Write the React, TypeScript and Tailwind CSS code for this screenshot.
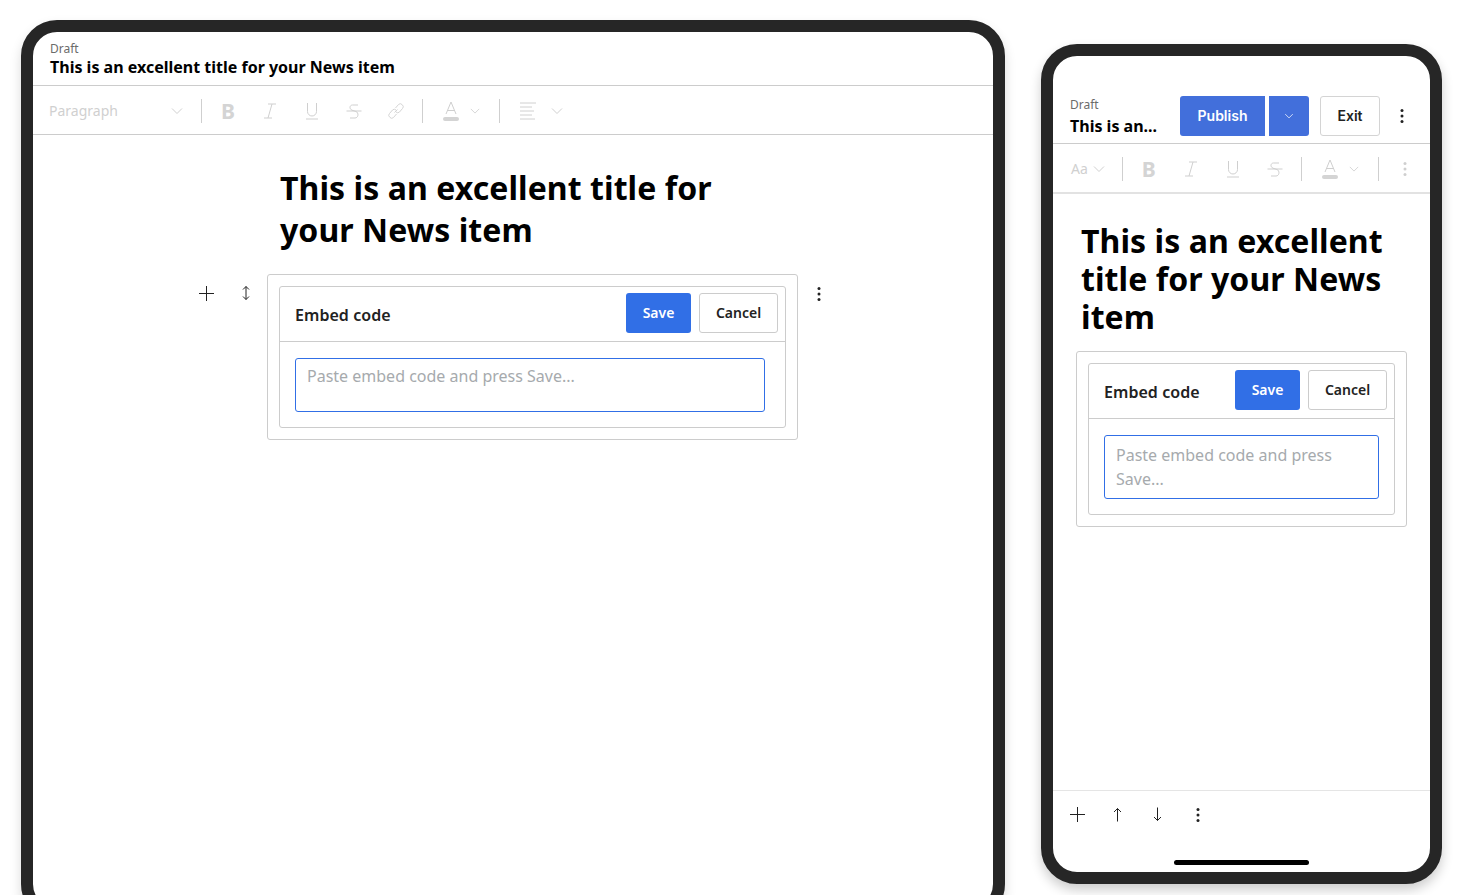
import React from "react";

const sans = "font-['Noto_Sans',sans-serif]";

function Chevron({ className = "" }: { className?: string }) {
  return (
    <svg viewBox="0 0 12 8" className={className} fill="none" stroke="currentColor" strokeWidth="1">
      <path d="M1 1.5l5 5 5-5" />
    </svg>
  );
}

function Kebab({ className = "" }: { className?: string }) {
  return (
    <svg viewBox="0 0 4 16" className={`w-1 h-4 ${className}`} fill="currentColor">
      <circle cx="2" cy="2.500" r="1.500" />
      <circle cx="2" cy="8" r="1.500" />
      <circle cx="2" cy="13.500" r="1.500" />
    </svg>
  );
}

function Plus() {
  return (
    <svg viewBox="0 0 15 15" className="w-[15px] h-[15px]" fill="none" stroke="#222" strokeWidth="1">
      <path d="M7.500 0v15M0 7.500h15" />
    </svg>
  );
}

function Arrow({ down = false }: { down?: boolean }) {
  return (
    <svg viewBox="0 0 9 15" className={down ? "w-[9px] h-[15px] rotate-180" : "w-[9px] h-[15px]"} fill="none" stroke="#222" strokeWidth="1">
      <path d="M4.500 14.500V1.500M1 5l3.500-3.500L8 5" />
    </svg>
  );
}

function Sep() {
  return <div className="w-px h-6 bg-[#cfcfcf]" />;
}

function Cell({ children }: { children: React.ReactNode }) {
  return <div className="flex items-center justify-center w-[42px]">{children}</div>;
}

function BoldIcon() {
  return <span className={`${sans} text-[21px] leading-6 font-bold text-[#d4d4d4]`}>B</span>;
}

function ItalicIcon() {
  return (
    <svg viewBox="0 0 14 16" className="w-3.5 h-4" fill="none" stroke="#cfcfcf" strokeWidth="1">
      <path d="M5 1h8M1 15h8M9 1L5 15" />
    </svg>
  );
}

function UnderlineIcon() {
  return (
    <svg viewBox="0 0 14 18" className="w-3.5 h-[18px]" fill="none" stroke="#cfcfcf" strokeWidth="1">
      <path d="M2.500 1v8.500a4.500 4.500 0 009 0V1M1 17h12" />
    </svg>
  );
}

function StrikeIcon() {
  return (
    <svg viewBox="0 0 16 16" className="w-4 h-4" fill="none" stroke="#cfcfcf" strokeWidth="1">
      <path d="M12 2H6.500C3.500 2 3 6 6 7.200l4 1.300c3 1.200 2.500 6.500-1 6.500H4M.5 8h15" />
    </svg>
  );
}

function LinkIcon() {
  return (
    <svg viewBox="0 0 18 18" className="w-[18px] h-[18px]" fill="none" stroke="#d4d4d4" strokeWidth="1">
      <path d="M7.500 10.500l3-3M8.500 6l3-3.500a2.500 2.500 0 013.500 0l.5.500a2.500 2.500 0 010 3.500l-3 3.500a2.500 2.500 0 01-3.500 0M9.500 12l-3 3.500a2.500 2.500 0 01-3.500 0L2.500 15a2.500 2.500 0 010-3.500l3-3.500a2.500 2.500 0 013.500 0" />
    </svg>
  );
}

function ColorIcon() {
  return (
    <svg viewBox="0 0 16 20" className="w-4 h-5" fill="none">
      <path d="M3 13L8 1l5 12M4.500 9.500h7" stroke="#cfcfcf" strokeWidth="1" />
      <rect x="0" y="16" width="16" height="4" rx="2" fill="#d4d4d4" />
    </svg>
  );
}

function AlignIcon() {
  return (
    <svg viewBox="0 0 16 18" className="w-4 h-[18px]" fill="none" stroke="#d0d0d0" strokeWidth="1">
      <path d="M0 1h16M0 5h12M0 9h14M0 13h12M0 17h15" />
    </svg>
  );
}

function EmbedCard({ wrapClass, inputClass }: { wrapClass: string; inputClass: string }) {
  return (
    <div className="border border-[#cccccc] rounded-[3px] p-[11px] bg-white">
      <div className="border border-[#cccccc] rounded-[3px]">
        <div className="flex items-start justify-between h-[55px] border-b border-[#cccccc] pl-[15px] pr-[7px] pt-[6px]">
          <span className={`${sans} text-base font-semibold tracking-[0.05px] text-[#222222] leading-6 mt-[10px]`}>Embed code</span>
          <div className="flex gap-2">
            <div className={`${sans} flex items-center justify-center w-[65px] h-10 rounded-[3px] bg-[#316fe6] text-white text-sm font-semibold`}>
              Save
            </div>
            <div className={`${sans} flex items-center justify-center w-[79px] h-10 rounded-[3px] border border-[#cccccc] text-[#222222] text-sm font-semibold`}>
              Cancel
            </div>
          </div>
        </div>
        <div className={`pt-4 pb-[15px] pl-[15px] ${wrapClass}`}>
          <div className={`border border-[#316fe6] rounded-[3px] px-[11px] ${sans} text-base leading-6 text-[#a6aaad] ${inputClass}`}>
            Paste embed code and press Save...
          </div>
        </div>
      </div>
    </div>
  );
}

function Tablet() {
  return (
    <div className="w-[984px] h-[900px] mt-5 shrink-0 border-[12px] border-[#262626] rounded-[36px] bg-white overflow-hidden shadow-[0_6px_12px_rgba(0,0,0,0.15)]">
      <div className="h-[54px] border-b border-[#cccccc] pl-[17px] pt-[10px]">
        <div className={`${sans} text-xs leading-[14px] text-[#6b6b6b]`}>Draft</div>
        <div className={`${sans} text-base leading-6 font-bold text-black -mt-[1px]`}>
          This is an excellent title for your News item
        </div>
      </div>
      <div className="flex items-center h-[49px] border-b border-[#cccccc] pl-4 pt-[2px]">
        <div className={`${sans} w-[122px] text-sm text-[#d0d0d0]`}>Paragraph</div>
        <Chevron className="w-3 h-2 text-[#cfcfcf]" />
        <div className="ml-[18px]"><Sep /></div>
        <div className="flex items-center ml-[5px]">
          <Cell><BoldIcon /></Cell>
          <Cell><ItalicIcon /></Cell>
          <Cell><UnderlineIcon /></Cell>
          <Cell><StrikeIcon /></Cell>
          <Cell><LinkIcon /></Cell>
        </div>
        <div className="ml-[5px]"><Sep /></div>
        <div className="ml-[20px]"><ColorIcon /></div>
        <Chevron className="w-2.5 h-2 ml-[11px] text-[#cfcfcf]" />
        <div className="ml-[19px]"><Sep /></div>
        <div className="ml-[20px]"><AlignIcon /></div>
        <Chevron className="w-3 h-2 ml-[15px] text-[#cfcfcf]" />
      </div>
      <div className="pt-[32px]">
        <h1 className={`${sans} ml-[247px] w-[480px] text-[32px] leading-[42px] font-bold tracking-[0.07px] text-black`}>
          This is an excellent title for your News item
        </h1>
        <div className="flex items-start mt-[23px] ml-[165px]">
          <div className="flex items-center pt-[11px] pl-px w-[69px]">
            <Plus />
            <svg viewBox="0 0 10 16" className="w-2.5 h-4 ml-[27px]" fill="none" stroke="#222" strokeWidth="1">
              <path d="M5 1.500v13M2 4.500l3-3 3 3M2 11.500l3 3 3-3" />
            </svg>
          </div>
          <div className="w-[531px]">
            <EmbedCard wrapClass="pr-5" inputClass="h-[54px] pt-[5px]" />
          </div>
          <div className="pl-[19px] pt-3">
            <Kebab className="text-[#222222]" />
          </div>
        </div>
      </div>
    </div>
  );
}

function Phone() {
  return (
    <div className="flex flex-col w-[401px] h-[840px] mt-11 shrink-0 border-[12px] border-[#262626] rounded-[36px] bg-white overflow-hidden shadow-[0_6px_12px_rgba(0,0,0,0.2)]">
      <div className="flex items-center h-[88px] pt-8 border-b border-[#cccccc] pl-[17px] shrink-0">
        <div className="w-[110px] mt-1">
          <div className={`${sans} text-xs leading-[14px] text-[#6b6b6b]`}>Draft</div>
          <div className={`${sans} text-base leading-6 font-bold text-black mt-0.5`}>This is an...</div>
        </div>
        <div className="flex items-center font-['Inter',sans-serif] text-sm font-semibold">
          <div className="flex items-center justify-center w-[85px] h-10 bg-[#426fdb] text-white rounded-l-[3px]">Publish</div>
          <div className="flex items-center justify-center w-10 h-10 ml-1 bg-[#426fdb] text-white rounded-r-[3px]">
            <Chevron className="w-2.5 h-1.5" />
          </div>
          <div className="flex items-center justify-center w-[60px] h-10 ml-[11px] border border-[#d4d4d4] rounded-[3px] text-[#222222]">Exit</div>
          <Kebab className="ml-5 text-[#222222]" />
        </div>
      </div>
      <div className="flex items-center h-[50px] border-b-2 border-[#e2e2e2] pl-[18px] pt-[2px] shrink-0">
        <span className={`${sans} text-sm text-[#d0d0d0]`}>Aa</span>
        <Chevron className="w-3 h-2 ml-[5px] text-[#cfcfcf]" />
        <div className="ml-[17px]"><Sep /></div>
        <div className="flex items-center ml-[5px]">
          <Cell><BoldIcon /></Cell>
          <Cell><ItalicIcon /></Cell>
          <Cell><UnderlineIcon /></Cell>
          <Cell><StrikeIcon /></Cell>
        </div>
        <div className="ml-[5px]"><Sep /></div>
        <div className="ml-[20px]"><ColorIcon /></div>
        <Chevron className="w-2.5 h-2 ml-[11px] text-[#cfcfcf]" />
        <div className="ml-[19px]"><Sep /></div>
        <Kebab className="ml-6 text-[#cfcfcf]" />
      </div>
      <div className="flex-1 px-[23px] pt-[28px]">
        <h1 className={`${sans} ml-[5px] text-[32px] leading-[38px] font-bold tracking-[0.07px] text-black`}>
          This is an excellent title for your News item
        </h1>
        <div className="mt-[15px]">
          <EmbedCard wrapClass="pr-[15px]" inputClass="h-16 pt-[7px]" />
        </div>
      </div>
      <div className="flex items-center h-[50px] border-t border-[#e5e5e5] pl-1 pb-[2px] shrink-0">
        <div className="flex justify-center w-10"><Plus /></div>
        <div className="flex justify-center w-10"><Arrow /></div>
        <div className="flex justify-center w-10"><Arrow down /></div>
        <div className="flex justify-center w-10 pl-0.5"><Kebab className="text-[#222222]" /></div>
      </div>
      <div className="flex justify-center items-start h-[32px] pt-5 shrink-0">
        <div className="w-[135px] h-[5px] rounded-full bg-black" />
      </div>
    </div>
  );
}

export default function App() {
  return (
    <div className="flex items-start h-[895px] overflow-hidden bg-white pl-[21px] gap-9">
      <Tablet />
      <Phone />
    </div>
  );
}
